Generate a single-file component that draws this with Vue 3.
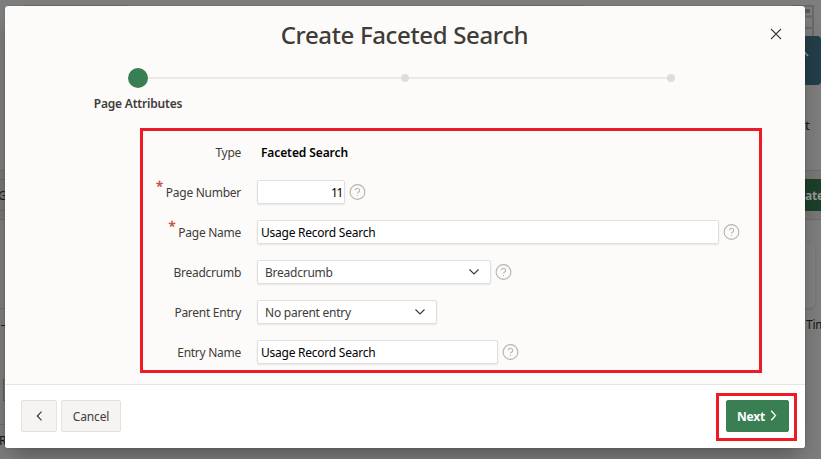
<script setup>
const fields = [
  { label: 'Type', kind: 'text', value: 'Faceted Search', size: 'w-auto' },
  { label: 'Page Number', kind: 'input', value: '11', required: true, help: true, size: 'w-num' },
  { label: 'Page Name', kind: 'input', value: 'Usage Record Search', required: true, help: true, size: 'w-name' },
  { label: 'Breadcrumb', kind: 'select', value: 'Breadcrumb', help: true, size: 'w-crumb' },
  { label: 'Parent Entry', kind: 'select', value: 'No parent entry', size: 'w-parent' },
  { label: 'Entry Name', kind: 'input', value: 'Usage Record Search', help: true, size: 'w-entry' }
]
</script>

<template>
  <div class="screen">
    <!-- page behind the dialog -->
    <div class="behind">
      <i class="rule top-a"></i>
      <i class="rule top-b"></i>
      <svg class="grid-icon" width="24" height="40" viewBox="0 0 24 40" fill="none" stroke="#6b6967">
        <path d="M0 1h22v39M0 11.500h22M0 23h22" stroke-width="2" />
        <path d="M12 6h7" stroke="#595858" stroke-width="4" />
      </svg>
      <div class="tile">
        <svg width="20" height="48" viewBox="0 0 20 48" fill="none" stroke="#8d9a9e" stroke-width="1.500"><path d="M4 8l8 9" /></svg>
      </div>
      <span class="bt bt-t">t</span>
      <div class="bar bar-left"><span>G</span></div>
      <div class="bar bar-right"><b>ate</b></div>
      <div class="card"></div>
      <span class="bt bt-tim">Tim</span>
      <i class="rule left-a"></i>
      <i class="rule left-b"></i>
      <i class="dash"></i>
      <i class="sheet"></i>
      <span class="bt bt-r">R</span>
    </div>

    <section class="dialog">
      <header class="head">
        <h1>Create Faceted Search</h1>
        <button class="close" aria-label="Close">
          <svg width="12" height="12" viewBox="0 0 12 12" fill="none" stroke="#403c38" stroke-width="1.100"><path d="M1 1l10 10M11 1L1 11" /></svg>
        </button>
      </header>

      <div class="steps">
        <span class="dot current"></span><span class="line first"></span><span class="dot"></span><span class="line"></span><span class="dot"></span>
      </div>
      <div class="step-label"><span>Page Attributes</span></div>

      <form class="form" @submit.prevent>
        <div v-for="f in fields" :key="f.label" class="row">
          <label class="label"><span v-if="f.required" class="star">*</span><span>{{ f.label }}</span></label>
          <div class="control" :class="[f.kind, f.size]">
            <span>{{ f.value }}</span>
            <svg v-if="f.kind === 'select'" width="10" height="6" viewBox="0 0 10 6" fill="none" stroke="#403c38" stroke-width="1.200"><path d="M.5.5L5 5 9.500.5" /></svg>
          </div>
          <svg v-if="f.help" class="help" width="17" height="16" viewBox="0 0 17 16" fill="none" stroke="#b5b2af" stroke-width="1.100">
            <circle cx="8.500" cy="8" r="7.400" />
            <path d="M6.400 6.300a2.100 2.100 0 1 1 3.100 1.900c-.7.400-1 .6-1 1.300M8.500 10.900v1.200" />
          </svg>
        </div>
      </form>

      <footer class="foot">
        <button class="btn back" aria-label="Back">
          <svg width="7" height="10" viewBox="0 0 7 10" fill="none" stroke="#403c38" stroke-width="1.200"><path d="M5.500.7L1.300 5l4.200 4.300" /></svg>
        </button>
        <button class="btn cancel"><span>Cancel</span></button>
        <div class="mark">
          <button class="btn next"><span>Next</span>
            <svg width="7" height="11" viewBox="0 0 7 11" fill="none" stroke="#fff" stroke-width="1.300"><path d="M1.200.8l4.300 4.700-4.300 4.700" /></svg>
          </button>
        </div>
      </footer>
    </section>
  </div>
</template>

<style>
body { margin: 0; overflow: hidden; }
</style>

<style scoped>
* { box-sizing: border-box; }
.screen { position: relative; width: 821px; height: 459px; padding: 6px 0 0 5px; overflow: hidden; background: #7e7e7e; font-family: "Noto Sans", "Open Sans", sans-serif; font-size: 12px; letter-spacing: -.24px; color: #403c38; }
.behind { position: absolute; inset: 0; }
.behind > * { position: absolute; }
.rule { height: 1px; background: #706e6d; }
.top-a { left: 24px; top: 5px; width: 104px; }
.top-b { left: 481px; top: 5px; width: 104px; }
.left-a { left: 0; top: 308px; width: 5px; }
.left-b { left: 0; top: 424px; width: 5px; }
.grid-icon { left: 791px; top: 5px; }
.tile { left: 796px; top: 36px; width: 25px; height: 49px; border-radius: 0 4px 4px 0; background: #233f49; }
.tile svg { display: block; margin: 3px 0 0 0; }
.bt { font-size: 13px; line-height: 18px; color: #171615; }
.bt-t { left: 805px; top: 116px; }
.bt-tim { left: 806px; top: 316px; font-size: 12px; }
.bt-r { left: -1px; top: 432px; font-size: 12px; }
.bar { top: 170px; height: 50px; background: #797877; border: solid #6f6d6b; border-width: 1px 0; }
.bar-left { left: 0; width: 5px; padding-top: 8px; }
.bar-left span { display: flex; align-items: center; height: 32px; margin-left: -2px; border: solid #6f6d6b; border-width: 1px 0; font-size: 12px; color: #201e1c; }
.bar-right { left: 805px; width: 16px; padding-top: 8px; overflow: hidden; }
.bar-right b { display: flex; align-items: center; height: 32px; background: #1c402a; color: #999; font-size: 12px; }
.card { left: 796px; top: 244px; width: 19px; height: 64px; border-radius: 5px; background: #818181; box-shadow: 0 1px 2px #6d6d6d; }
.dash { left: 1px; top: 325px; width: 4px; height: 1px; background: #222; }
.sheet { left: 3px; top: 379px; width: 4px; height: 22px; border: 1px solid #5c5c60; }

.dialog { position: relative; display: flex; flex-direction: column; width: 800px; height: 442px; border-radius: 3px; overflow: hidden; background: #fcfbfa; box-shadow: 0 12px 24px -6px rgba(0, 0, 0, .35), 0 0 2px rgba(0, 0, 0, .2); }
.head { display: grid; grid-template-columns: 1fr auto 1fr; align-items: center; height: 58px; flex: none; }
h1 { grid-column: 2; margin: 0 1px 0 0; font-size: 24px; line-height: 32px; font-weight: 500; letter-spacing: -.35px; white-space: nowrap; }
.close { justify-self: end; display: flex; padding: 0; margin: 0 23px 2px 0; border: 0; background: none; }
.steps { display: flex; align-items: center; height: 28px; padding-left: 123px; flex: none; }
.dot { width: 8px; height: 8px; border-radius: 50%; background: #dfdcd9; }
.dot.current { width: 20px; height: 20px; background: #3a7e54; }
.line { width: 258px; height: 2px; background: #ebe9e7; }
.line.first { width: 253px; }
.step-label { display: flex; justify-content: center; width: 266px; height: 36px; padding-top: 3px; flex: none; font-weight: 600; letter-spacing: -.2px; line-height: 17px; }
.form { display: flex; flex-direction: column; width: 622px; height: 245px; margin-left: 135px; padding-top: 1px; border: 3px solid #ed1c24; flex: none; }
.row { display: flex; align-items: center; height: 40px; flex: none; }
.label { display: flex; justify-content: flex-end; align-items: center; gap: 3px; width: 98px; margin-right: 16px; padding-top: 0; line-height: 17px; letter-spacing: -.27px; white-space: nowrap; }
.star { align-self: flex-start; margin-top: -6px; color: #c74634; font-size: 13px; line-height: 17px; -webkit-text-stroke: .3px #c74634; }
.control { display: flex; align-items: center; height: 24px; line-height: 17px; white-space: nowrap; color: #161513; }
.control > span { padding-top: 1px; }
.text { padding-left: 4px; font-weight: 600; letter-spacing: -.1px; color: #000; }
.input, .select { height: 24px; background: #fff; border: 1px solid #e1dfdd; border-radius: 2px; box-shadow: 0 1px 2px rgba(0, 0, 0, .09); }
.input { padding: 0 3px; color: #000; }
.select { justify-content: space-between; padding: 0 11px 0 7px; color: #403c38; }
.select svg { margin-bottom: 1px; }
.w-num { width: 88px; padding-right: 2px; justify-content: flex-end; letter-spacing: -1.400px; }
.w-name { width: 462px; }
.w-crumb { width: 234px; }
.w-parent { width: 180px; }
.w-entry { width: 241px; }
.help { margin-left: 4px; flex: none; }

.foot { display: flex; align-items: center; height: 64px; padding: 0 8px 2px 16px; background: #fff; border-top: 1px solid #e6e4e2; margin-top: auto; }
.btn { display: flex; align-items: center; justify-content: center; height: 32px; padding: 0; border: 1px solid #e4e1de; border-radius: 2px; background: #f5f4f2; color: #403c38; font: 12px/17px "Noto Sans", sans-serif; letter-spacing: -.15px; }
.btn span { padding-top: 2px; }
.back { width: 36px; }
.cancel { width: 60px; margin-left: 4px; }
.mark { display: flex; align-items: center; justify-content: center; width: 81px; height: 48px; margin-left: auto; margin-top: 2px; border: 3px solid #ed1c24; }
.next { width: 63px; gap: 5px; margin: -2px 0 0 1px; border-color: #3a7e54; background: #3a7e54; color: #fff; font-weight: 700; }
</style>
